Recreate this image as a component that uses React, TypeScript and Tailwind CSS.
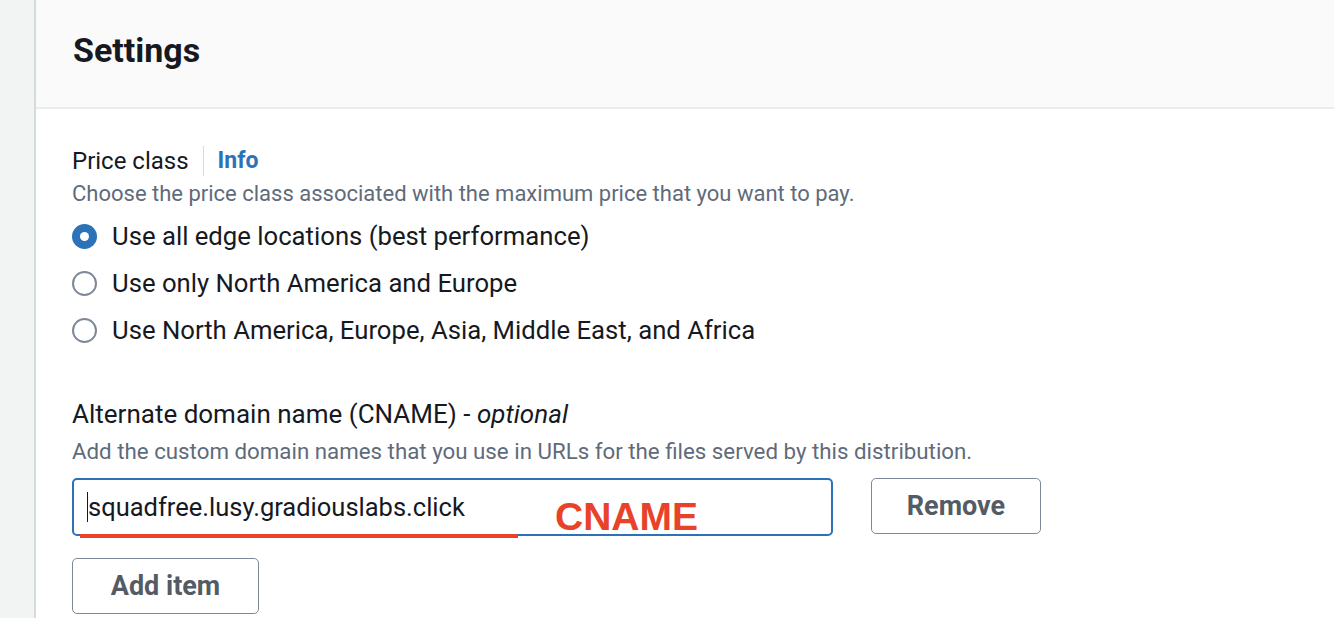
import React from "react";

const font = { fontFamily: "Roboto, 'Open Sans', sans-serif" };

function Radio({ checked, label }: { checked?: boolean; label: string }) {
  return (
    <div className="flex h-[47px] items-center gap-[15px]">
      {checked ? (
        <span className="flex h-[25px] w-[25px] items-center justify-center rounded-full bg-[#2b72b9]">
          <span className="h-[9px] w-[9px] rounded-full bg-white" />
        </span>
      ) : (
        <span className="h-[25px] w-[25px] rounded-full border-[2.5px] border-[#7d8998] bg-white" />
      )}
      <span className="text-[25.7px] text-[#16191f]">{label}</span>
    </div>
  );
}

export default function App() {
  return (
    <div className="flex h-[618px] w-[1334px] overflow-hidden bg-[#f2f3f3]" style={font}>
      <div className="w-[34px] shrink-0" />
      <main className="flex-1 border-l-2 border-[#d5dbdb] bg-white">
        {/* card header */}
        <header className="h-[109px] border-b-2 border-[#eaeded] bg-[#fafafa] pl-[37px] pt-[28px]">
          <h2 className="text-[34px] font-bold leading-[44px] text-[#16191f]">Settings</h2>
        </header>

        <section className="pl-[36px] pt-[36px]">
          <div className="flex h-[32px] items-center">
            <span className="text-[24px] text-[#16191f]">Price class</span>
            <span className="mx-[14px] h-[30px] w-px bg-[#d5dbdb]" />
            <a href="#" className="text-[23px] font-bold text-[#2b72b9]">Info</a>
          </div>
          <p className="mt-[3px] text-[22px] leading-[28px] text-[#5f6b7a]">
            Choose the price class associated with the maximum price that you want to pay.
          </p>
          <div className="mt-[5px]">
            <Radio checked label="Use all edge locations (best performance)" />
            <Radio label="Use only North America and Europe" />
            <Radio label="Use North America, Europe, Asia, Middle East, and Africa" />
          </div>

          <div className="mt-[44px] text-[26px] leading-[32px] text-[#16191f]">
            Alternate domain name (CNAME) - <i>optional</i>
          </div>
          <p className="mt-[7px] text-[22.3px] leading-[28px] text-[#5f6b7a]">
            Add the custom domain names that you use in URLs for the files served by this distribution.
          </p>

          <div className="mt-[13px] flex items-start gap-[38px]">
            <div className="relative">
              <div className="flex h-[58px] w-[761px] items-center rounded-[5px] border-2 border-[#2b72b9] pl-[13px]">
                <span className="h-[30px] w-px bg-[#16191f]" />
                <span className="text-[25.5px] text-[#16191f]">squadfree.lusy.gradiouslabs.click</span>
              </div>
              <span className="absolute left-[8px] top-[56px] h-[4px] w-[438px] bg-[#e8432a]" />
              <span
                className="absolute left-[483px] top-[19px] text-[39px] font-bold leading-none text-[#e8432a]"
                style={{ fontFamily: "'Liberation Sans', Arial, sans-serif" }}
              >
                CNAME
              </span>
            </div>
            <button className="h-[56px] w-[170px] rounded-[5px] border-[1.5px] border-[#7d8998] text-[27px] font-bold text-[#545b64]">
              Remove
            </button>
          </div>

          <button className="mt-[22px] h-[56px] w-[187px] rounded-[5px] border-[1.5px] border-[#7d8998] text-[27px] font-bold text-[#545b64]">
            Add item
          </button>
        </section>
      </main>
    </div>
  );
}
